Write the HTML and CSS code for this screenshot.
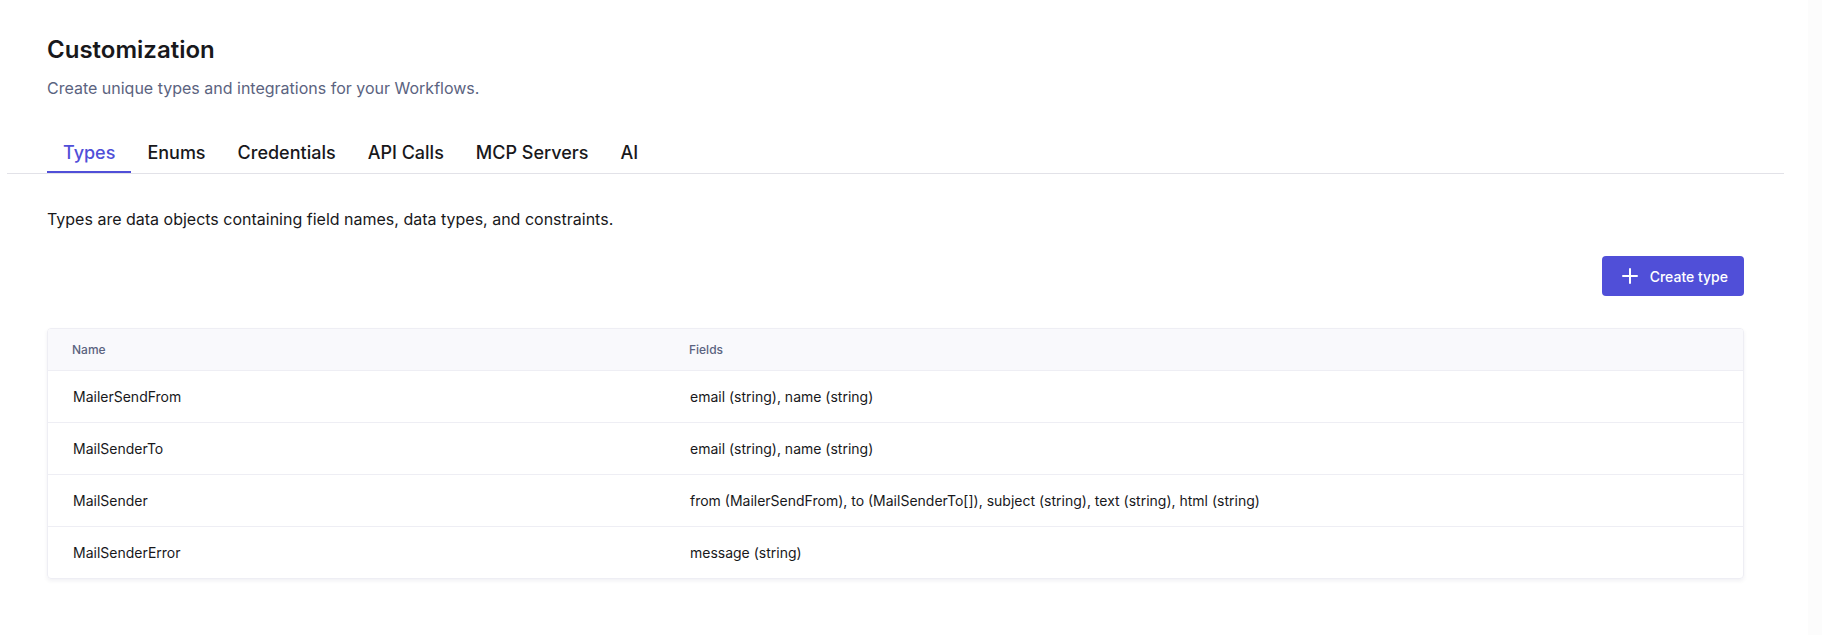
FILE: index.html
```html
<!DOCTYPE html>
<html lang="en">
<head>
    <meta charset="UTF-8">
    <meta name="viewport" content="width=device-width, initial-scale=1.0">
    <title>Customization</title>
    <link rel="stylesheet" href="styles.css">
</head>
<body>

<main class="page">
    <header class="page-header">
        <h1 class="page-title">Customization</h1>
        <p class="page-subtitle">Create unique types and integrations for your Workflows.</p>
    </header>

    <nav class="tabs">
        <a class="tab active" href="#types">Types</a>
        <a class="tab" href="#enums">Enums</a>
        <a class="tab" href="#credentials">Credentials</a>
        <a class="tab" href="#api-calls">API Calls</a>
        <a class="tab" href="#mcp-servers">MCP Servers</a>
        <a class="tab" href="#ai">AI</a>
    </nav>

    <section class="content">
        <p class="intro">Types are data objects containing field names, data types, and constraints.</p>

        <div class="actions">
            <button type="button" class="create-button">
                <svg class="icon" viewBox="0 0 24 24" fill="none" stroke="currentColor" stroke-width="2" stroke-linecap="round" aria-hidden="true">
                    <path d="M12 5v14M5 12h14"/>
                </svg>
                Create type
            </button>
        </div>

        <div class="table-card">
            <table class="types-table">
                <thead>
                <tr>
                    <th class="name-column">Name</th>
                    <th>Fields</th>
                </tr>
                </thead>
                <tbody>
                <tr>
                    <td>MailerSendFrom</td>
                    <td>email (string), name (string)</td>
                </tr>
                <tr>
                    <td>MailSenderTo</td>
                    <td>email (string), name (string)</td>
                </tr>
                <tr>
                    <td>MailSender</td>
                    <td>from (MailerSendFrom), to (MailSenderTo[]), subject (string), text (string), html (string)</td>
                </tr>
                <tr>
                    <td>MailSenderError</td>
                    <td>message (string)</td>
                </tr>
                </tbody>
            </table>
        </div>
    </section>
</main>

</body>
</html>
```
FILE: styles.css
```css
* {
    box-sizing: border-box;
}

body {
    margin: 0;
    font-family: Inter, sans-serif;
    font-size: 16px;
    line-height: 24px;
    color: #18181b;
    background-color: #fff;
}

.page {
    min-height: 100vh;
    padding: 34px 24px 40px 7px;
    border-right: 14px solid #fcfcfc; /* scrollbar track */
}

.page-header {
    padding: 0 40px;
}

.page-title {
    margin: 0 0 10px;
    font-size: 24px;
    font-weight: 600;
    line-height: 32px;
}

.page-subtitle {
    margin: 0;
    color: #5b6380;
}

/* Tabs */
.tabs {
    display: flex;
    margin-top: 41px;
    padding: 0 40px;
    border-bottom: 1px solid #e2e2e8;
}

.tab {
    padding: 0 16px 6px;
    border-bottom: 2px solid transparent;
    font-size: 18px;
    font-weight: 500;
    color: #18181b;
    text-decoration: none;
}

.tab.active {
    color: #504fd8;
    border-bottom-color: #504fd8;
}

.content {
    padding: 33px 40px 0;
}

.intro {
    margin: 0;
}

.actions {
    display: flex;
    justify-content: flex-end;
    margin: 25px 0 32px;
}

.create-button {
    display: flex;
    align-items: center;
    gap: 8px;
    height: 40px;
    padding: 0 16px;
    border: none;
    border-radius: 4px;
    background-color: #504fd8;
    color: #fff;
    font-family: inherit;
    font-size: 14px;
    font-weight: 500;
    cursor: pointer;
}

.icon {
    width: 24px;
    height: 24px;
}

/* Types table */
.table-card {
    border: 1px solid #eeeef4;
    border-radius: 4px;
    box-shadow: 0 2px 4px rgba(24, 24, 60, 0.06);
    overflow: hidden;
}

.types-table {
    width: 100%;
    border-collapse: separate;
    border-spacing: 0;
    table-layout: fixed;
}

.types-table th {
    padding: 9px 24px 8px;
    background-color: #f9f9fc;
    color: #5b6380;
    font-size: 12px;
    font-weight: 500;
    text-align: left;
}

.types-table td {
    padding: 14px 24px 13px 25px;
    border-top: 1px solid #eeeef4;
    font-size: 14px;
}

.name-column {
    width: 36.4%;
}
```
